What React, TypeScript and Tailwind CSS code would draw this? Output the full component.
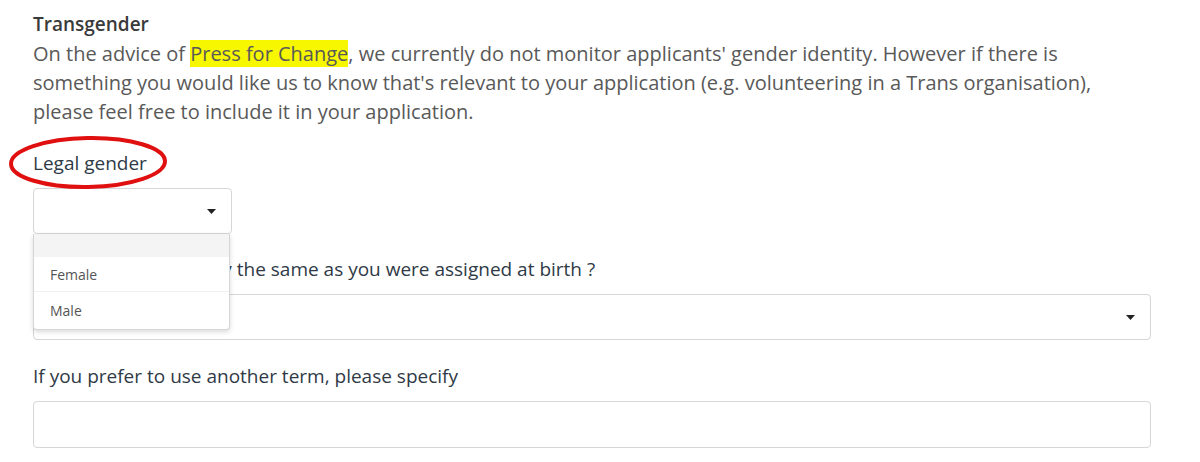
import React from 'react';

const Caret = () => (
  <svg width="9" height="5" viewBox="0 0 9 5" className="block">
    <path d="M0 0h9L4.5 5z" fill="#222" />
  </svg>
);

export default function App() {
  return (
    <div
      className="relative w-[1200px] h-[462px] overflow-hidden bg-white pl-[33px] pr-[49px] pt-[10px] text-[19px] leading-[29px]"
      style={{ fontFamily: '"Open Sans", "Noto Sans", Arial, sans-serif' }}
    >
      <h3 className="font-semibold text-[#3a3a3a]">Transgender</h3>
      <p className="text-[20px] text-[#595959] max-w-[1070px]">
        On the advice of <span className="bg-[#f7f700]">Press for Change</span>, we currently do not monitor applicants'
        gender identity. However if there is something you would like us to know that's relevant to your application
        (e.g. volunteering in a Trans organisation), please feel free to include it in your application.
      </p>

      <div className="mt-[23px]">
        <label className="block text-[#2f3a46] mb-[10px]">Legal gender</label>
        <div className="relative w-[199px]">
          <div className="h-[46px] border border-[#d6d6d6] rounded-[4px] flex items-center justify-end pr-[15px]">
            <Caret />
          </div>
          <ul className="absolute z-10 left-0 top-[46px] w-[197px] bg-white border border-[#d6d6d6] border-t-0 rounded-b-[4px] shadow-[0_2px_5px_rgba(0,0,0,0.15)] text-[14px] text-[#555]">
            <li className="h-[23px] bg-[#f4f4f4]"></li>
            <li className="h-[35px] flex items-center pl-[16px] border-b border-[#f0f0f0]">Female</li>
            <li className="h-[37px] flex items-center pl-[16px]">Male</li>
          </ul>
        </div>
      </div>

      <div className="mt-[21px]">
        <label className="block text-[#2f3a46] mb-[10px]">Is your gender identity the same as you were assigned at birth ?</label>
        <div className="h-[46px] border border-[#d6d6d6] rounded-[4px] flex items-center justify-end pr-[15px]">
          <Caret />
        </div>
      </div>

      <div className="mt-[22px]">
        <label className="block text-[#2f3a46] mb-[10px]">If you prefer to use another term, please specify</label>
        <div className="h-[47px] border border-[#d6d6d6] rounded-[4px]"></div>
      </div>

      <svg className="absolute left-[8px] top-[135px]" width="162" height="56" viewBox="0 0 162 56">
        <ellipse cx="80" cy="27.5" rx="77" ry="24.5" fill="none" stroke="#e01010" strokeWidth="4" transform="rotate(-1 80 27.5)" />
      </svg>
    </div>
  );
}
